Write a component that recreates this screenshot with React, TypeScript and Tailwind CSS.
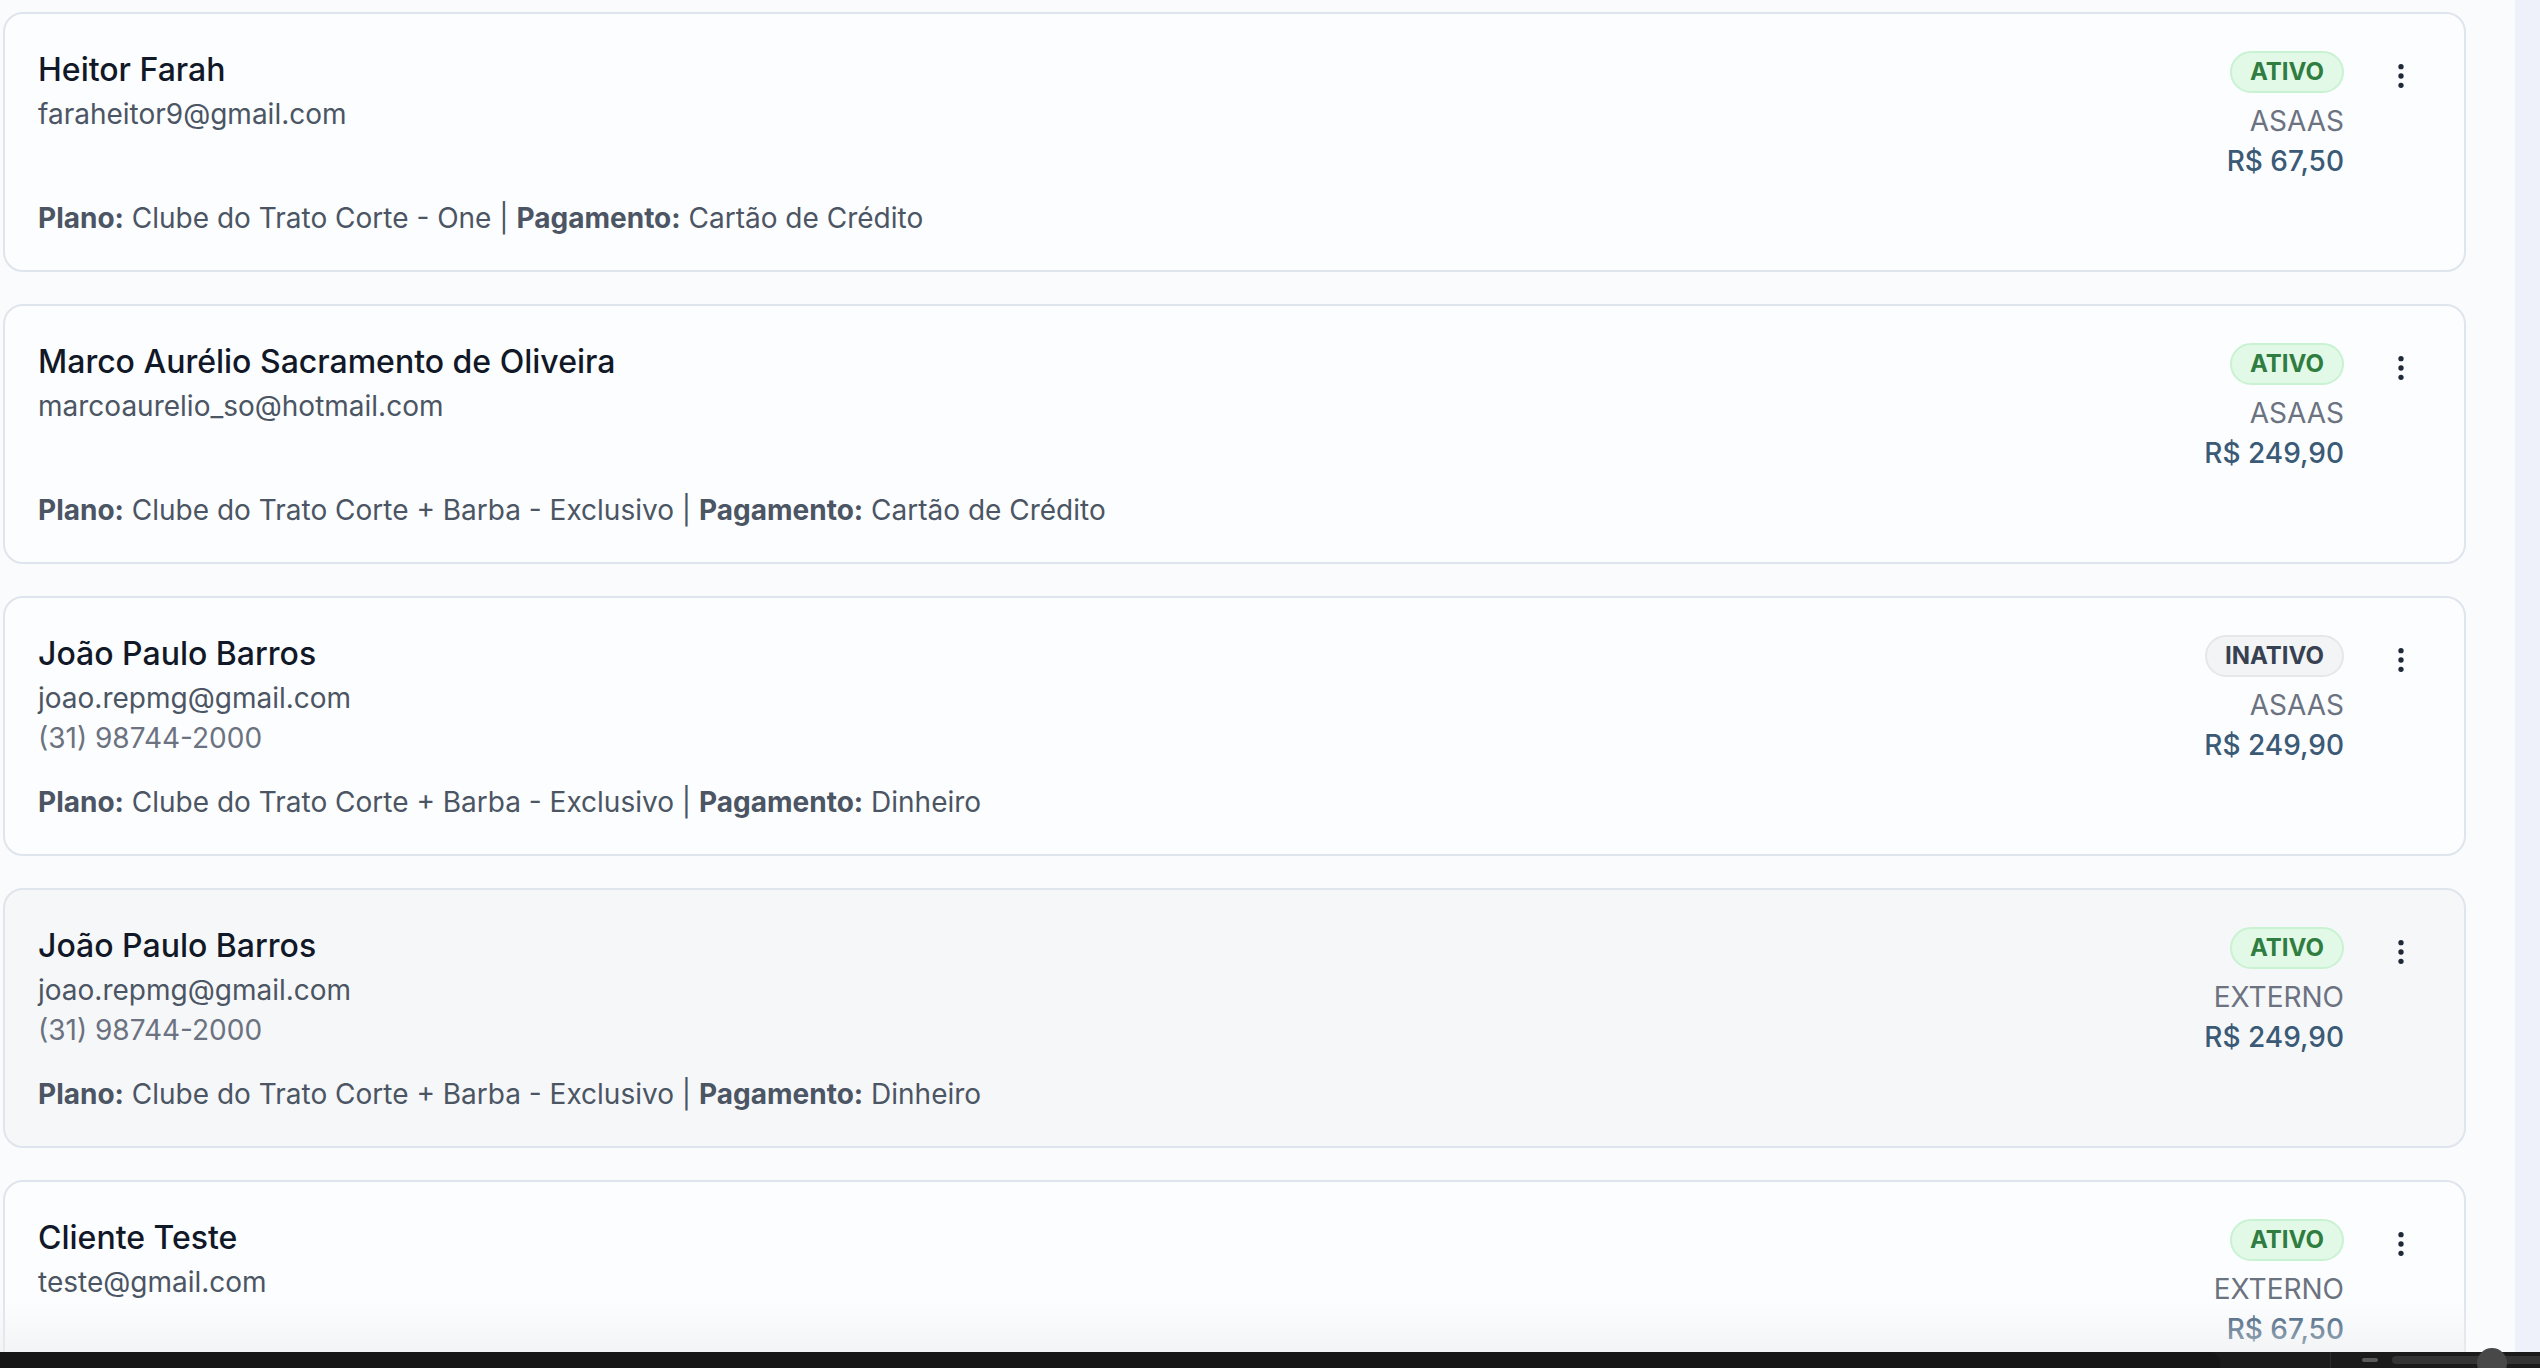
import React from "react";
import { EllipsisVertical } from "lucide-react";

type Sub = {
  name: string;
  email: string;
  phone?: string;
  active: boolean;
  source: string;
  price: string;
  plan: string;
  payment: string;
  hovered?: boolean;
};

const subs: Sub[] = [
  {
    name: "Heitor Farah",
    email: "faraheitor9@gmail.com",
    active: true,
    source: "ASAAS",
    price: "R$ 67,50",
    plan: "Clube do Trato Corte - One",
    payment: "Cartão de Crédito",
  },
  {
    name: "Marco Aurélio Sacramento de Oliveira",
    email: "marcoaurelio_so@hotmail.com",
    active: true,
    source: "ASAAS",
    price: "R$ 249,90",
    plan: "Clube do Trato Corte + Barba - Exclusivo",
    payment: "Cartão de Crédito",
  },
  {
    name: "João Paulo Barros",
    email: "joao.repmg@gmail.com",
    phone: "(31) 98744-2000",
    active: false,
    source: "ASAAS",
    price: "R$ 249,90",
    plan: "Clube do Trato Corte + Barba - Exclusivo",
    payment: "Dinheiro",
  },
  {
    name: "João Paulo Barros",
    email: "joao.repmg@gmail.com",
    phone: "(31) 98744-2000",
    active: true,
    source: "EXTERNO",
    price: "R$ 249,90",
    plan: "Clube do Trato Corte + Barba - Exclusivo",
    payment: "Dinheiro",
    hovered: true,
  },
  {
    name: "Cliente Teste",
    email: "teste@gmail.com",
    active: true,
    source: "EXTERNO",
    price: "R$ 67,50",
    plan: "Clube do Trato Corte - One",
    payment: "Cartão de Crédito",
  },
];

function Card({ s }: { s: Sub }) {
  return (
    <div
      className={
        "shrink-0 rounded-[20px] border-2 border-[#dfe5ec] pt-[32px] pb-[32px] pl-[33px] pr-[32px] " +
        (s.hovered ? "bg-[#f6f7f9]" : "bg-[#fcfdfe]")
      }
    >
      <div className="flex items-start justify-between">
        <div className="flex flex-col">
          <div className="text-[32px] leading-[48px] font-medium text-[#111827]">{s.name}</div>
          <div className="text-[28px] leading-[40px] text-[#4b5563]">{s.email}</div>
          {s.phone && <div className="text-[28px] leading-[40px] text-[#6b7280]">{s.phone}</div>}
        </div>
        <div className="flex items-start">
          <div className="flex flex-col items-end">
            {s.active ? (
              <span className="mt-[5px] h-[42px] rounded-full border-2 border-[#c9f2d2] bg-[#e3f9e8] px-[18px] py-[4px] text-[24px] leading-[30px] font-bold text-[#2f7d40]">
                ATIVO
              </span>
            ) : (
              <span className="mt-[5px] h-[42px] rounded-full border-2 border-[#e5e7eb] bg-[#f3f4f6] px-[18px] py-[4px] text-[24px] leading-[30px] font-bold text-[#374151]">
                INATIVO
              </span>
            )}
            <div className="mt-[9px] text-[28px] leading-[39px] text-[#6b7280]">{s.source}</div>
            <div className="text-[28px] leading-[40px] font-medium text-[#3b5a76]">{s.price}</div>
          </div>
          <button className="ml-[26px] flex h-[60px] w-[62px] items-center justify-center text-[#1f2937]">
            <EllipsisVertical size={32} strokeWidth={2} />
          </button>
        </div>
      </div>
      <div className="mt-[17px] text-[28px] leading-[40px] text-[#4b5563]">
        <span className="font-bold">Plano:</span> {s.plan} | <span className="font-bold">Pagamento:</span>{" "}
        {s.payment}
      </div>
    </div>
  );
}

export default function App() {
  return (
    <div
      className="relative flex h-[1368px] w-full flex-col overflow-hidden bg-[#f8fafc]"
      style={{ fontFamily: "Inter, 'Noto Sans', sans-serif" }}
    >
      <div className="flex h-[1352px] w-full">
        <div className="relative flex-1 overflow-hidden bg-[#fafbfd]">
          <div className="flex w-[2466px] flex-col gap-[32px] pl-[3px] pt-[12px]">
            {subs.map((s, i) => (
              <Card key={i} s={s} />
            ))}
          </div>
          <div className="pointer-events-none absolute bottom-0 left-0 h-[50px] w-[2466px] bg-gradient-to-b from-transparent to-[#eceef1]/60" />
        </div>
        <div className="w-[25px] bg-[#eef1fa]" />
      </div>
      <div className="flex h-[16px] w-full items-center bg-[#1b1b1b]">
        <div className="h-full w-[2220px] rounded-tr-[10px] bg-[#161616]" />
        <div className="h-full w-[110px]" />
        <div className="h-full w-px bg-[#2c2c2c]" />
        <div className="ml-[31px] h-[4px] w-[16px] rounded-full bg-[#5a5a5a]" />
        <div className="relative ml-[14px] h-[8px] flex-1 rounded-l-full bg-[#343434]">
          <div className="absolute left-[85px] top-[-8px] h-[30px] w-[30px] rounded-full bg-[#484848]" />
        </div>
      </div>
    </div>
  );
}
